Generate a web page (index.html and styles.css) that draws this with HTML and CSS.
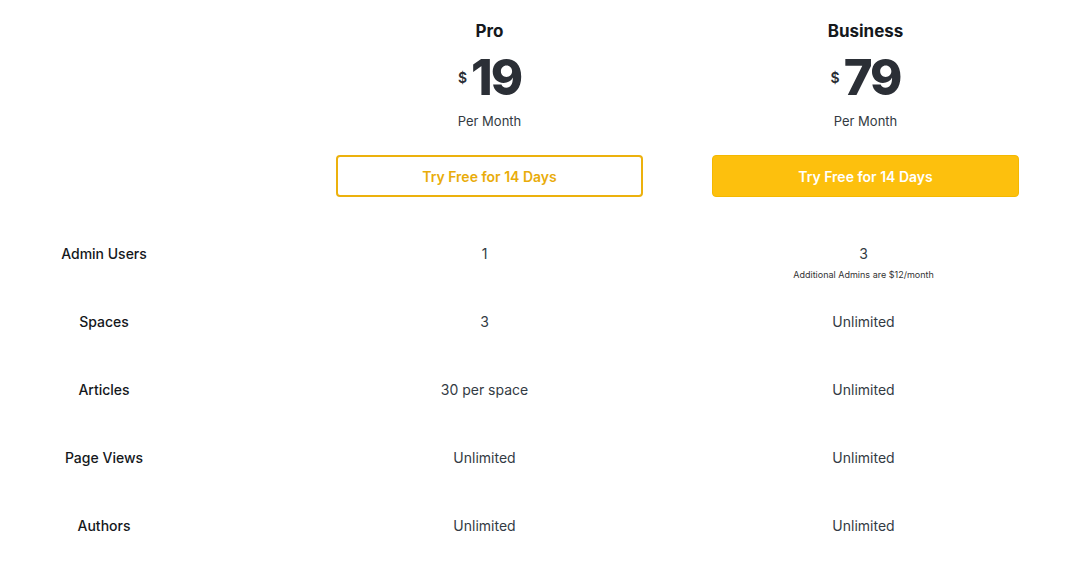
FILE: index.html
```html
<!DOCTYPE html>
<html lang="en">
<head>
  <meta charset="UTF-8">
  <meta name="viewport" content="width=device-width, initial-scale=1.0">
  <title>Pricing</title>

  <link rel="stylesheet" href="styles.css">
</head>
<body>
  <div class="pricing">
    <div class="plan-head empty"></div>

    <div class="plan-head">
      <div class="plan-name">Pro</div>
      <div class="plan-price"><span class="currency">$</span><span class="amount">19</span></div>
      <div class="plan-period">Per Month</div>
      <a class="btn btn-outline" href="#">Try Free for 14 Days</a>
    </div>

    <div class="plan-head business">
      <div class="plan-name">Business</div>
      <div class="plan-price"><span class="currency">$</span><span class="amount">79</span></div>
      <div class="plan-period">Per Month</div>
      <a class="btn btn-solid" href="#">Try Free for 14 Days</a>
    </div>

    <div class="label first">Admin Users</div>
    <div class="value first">1</div>
    <div class="value first">3<span class="note">Additional Admins are $12/month</span></div>

    <div class="label">Spaces</div>
    <div class="value">3</div>
    <div class="value">Unlimited</div>

    <div class="label">Articles</div>
    <div class="value">30 per space</div>
    <div class="value">Unlimited</div>

    <div class="label">Page Views</div>
    <div class="value">Unlimited</div>
    <div class="value">Unlimited</div>

    <div class="label">Authors</div>
    <div class="value">Unlimited</div>
    <div class="value">Unlimited</div>
  </div>
</body>
</html>
```

FILE: styles.css
```css
* {
  box-sizing: border-box;
}

body {
  margin: 0;
  background: #fff;
  font-family: Inter, "Noto Sans", sans-serif;
  color: #1f2329;
}

.pricing {
  display: grid;
  grid-template-columns: 297px 379px 379px;
}

.plan-head {
  display: flex;
  flex-direction: column;
  align-items: center;
  padding-top: 20px;
  padding-left: 6px;
}

.plan-head.business {
  padding-left: 0;
}

.plan-name {
  font-size: 17px;
  font-weight: 700;
  line-height: 22px;
  color: #15181c;
}

.plan-price {
  display: flex;
  align-items: center;
  height: 56px;
  margin-top: 8px;
  color: #2b2f36;
}

.currency {
  font-size: 14px;
  font-weight: 600;
  margin-right: 4px;
  margin-top: -2px;
}

.amount {
  font-size: 49px;
  font-weight: 800;
  letter-spacing: -2px;
  line-height: 56px;
}

.plan-period {
  font-size: 13px;
  line-height: 18px;
  margin-top: 6px;
  color: #333a42;
}

.btn {
  display: flex;
  align-items: center;
  justify-content: center;
  width: 307px;
  height: 42px;
  margin-top: 25px;
  border-radius: 4px;
  font-size: 14px;
  font-weight: 600;
  text-decoration: none;
}

.btn-outline {
  border: 2px solid #ecb10d;
  color: #e9ac0a;
  background: #fff;
}

.btn-solid {
  border: 1px solid #f4b800;
  background: #fdc00d;
  color: #fff;
}

.label,
.value {
  height: 68px;
  line-height: 20px;
  font-size: 14px;
}

.first {
  margin-top: 47px;
}

.label {
  width: 208px;
  text-align: center;
  font-weight: 500;
  color: #15181c;
}

.value {
  display: flex;
  flex-direction: column;
  align-items: center;
  padding-right: 4px;
  color: #333b44;
}

.note {
  margin-top: 5px;
  font-size: 9px;
  line-height: 12px;
  color: #333;
}
```
